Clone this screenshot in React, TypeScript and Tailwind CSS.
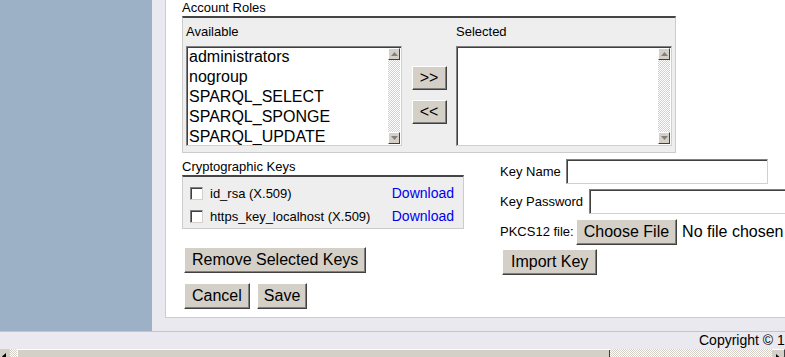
const btn =
  "flex items-center bg-[#d4d0c8] border border-t-white border-l-white border-r-[#404040] border-b-[#404040] shadow-[inset_-1px_-1px_0_#808080] text-[16px] leading-none text-black whitespace-nowrap"
const inset =
  "border border-t-[#808080] border-l-[#808080] border-r-[#d4d0c8] border-b-[#d4d0c8] shadow-[inset_1px_1px_0_#404040] bg-white"
const checker =
  "bg-[image:repeating-conic-gradient(#d4d0c8_0%_25%,#ffffff_0%_50%)] bg-[length:2px_2px]"

const Tri = ({ dir, color }: { dir: "up" | "down" | "left" | "right"; color: string }) => {
  const pts = {
    up: "0,4 3.5,0 7,4",
    down: "0,0 3.5,4 7,0",
    left: "4,0 0,3.5 4,7",
    right: "0,0 4,3.5 0,7",
  }[dir]
  const vertical = dir === "up" || dir === "down"
  return (
    <svg width={vertical ? 7 : 4} height={vertical ? 4 : 7} viewBox={vertical ? "0 0 7 4" : "0 0 4 7"}>
      <polygon points={pts} fill={color} />
    </svg>
  )
}

const ScrollBtn = ({ dir }: { dir: "up" | "down" }) => (
  <div className="flex h-[12px] w-[12px] items-center justify-center border border-t-white border-l-white border-r-[#404040] border-b-[#404040] bg-[#d4d0c8]">
    <Tri dir={dir} color="#808080" />
  </div>
)

const ListBox = ({ items }: { items: string[] }) => (
  <div className={`flex h-[100px] w-[216px] ${inset}`}>
    <div className="flex-1 overflow-hidden pl-[2px] text-[16px] leading-[20px] text-black">
      {items.map((i) => (
        <div key={i}>{i}</div>
      ))}
    </div>
    <div className="flex w-[13px] flex-col py-[1px] pr-[1px]">
      <ScrollBtn dir="up" />
      <div className={`flex-1 ${checker}`} />
      <ScrollBtn dir="down" />
    </div>
  </div>
)

const CheckBox = () => <div className={`h-[13px] w-[13px] ${inset}`} />

const KeyRow = ({ name }: { name: string }) => (
  <div className="flex h-[23px] items-center justify-between pl-[7px] pr-[9px]">
    <div className="flex items-center gap-[7px]">
      <CheckBox />
      <span className="text-[13px]">{name}</span>
    </div>
    <a className="cursor-pointer text-[14px] text-[#0000ee]">Download</a>
  </div>
)

export default function App() {
  return (
    <div className="flex h-[357px] w-[785px] flex-col overflow-hidden bg-[#e9e9ef] font-['Liberation_Sans',Arial,sans-serif] text-black">
      <div className="flex h-[331px] shrink-0">
        <div className="w-[152px] shrink-0 bg-[#9cb1c5]" />
        <div className="flex-1 pl-[13px]">
          <div className="h-[318px] border-b border-l border-r border-b-[#cccccc] border-l-[#cccccc] border-r-[#d4d0c8] bg-white pl-[16px]">
            {/* account roles */}
            <div className="h-[16px] text-[13px] leading-[16px]">Account Roles</div>
            <div className="w-[494px] border-b border-l border-r border-t-2 border-[#cccccc] border-t-[#454545] bg-[#eeeeee] px-[3px] pb-[6px] pt-[6px]">
              <div className="grid grid-cols-[216px_54px_216px]">
                <div className="h-[16px] text-[13px] leading-[16px]">Available</div>
                <div />
                <div className="h-[16px] text-[13px] leading-[16px]">Selected</div>
                <div className="mt-[6px]">
                  <ListBox
                    items={[
                      "administrators",
                      "nogroup",
                      "SPARQL_SELECT",
                      "SPARQL_SPONGE",
                      "SPARQL_UPDATE",
                    ]}
                  />
                </div>
                <div className="mt-[6px] flex flex-col items-center gap-[10px] pt-[20px]">
                  <button className={`${btn} h-[24px] w-[35px] justify-center text-[15px]`}>&gt;&gt;</button>
                  <button className={`${btn} h-[24px] w-[35px] justify-center text-[15px]`}>&lt;&lt;</button>
                </div>
                <div className="mt-[6px]">
                  <ListBox items={[]} />
                </div>
              </div>
            </div>

            <div className="mt-[6px] flex">
              {/* left column */}
              <div className="w-[282px] shrink-0">
                <div className="h-[16px] text-[13px] leading-[16px]">Cryptographic Keys</div>
                <div className="border-b border-l border-r border-t-2 border-[#cccccc] border-t-[#454545] bg-[#eeeeee] pt-[5px]">
                  <KeyRow name="id_rsa (X.509)" />
                  <KeyRow name="https_key_localhost (X.509)" />
                </div>
                <div className="ml-[2px] mt-[18px] flex">
                  <button className={`${btn} h-[26px] px-[7px]`}>Remove Selected Keys</button>
                </div>
                <div className="ml-[2px] mt-[10px] flex gap-[7px]">
                  <button className={`${btn} h-[26px] px-[7px]`}>Cancel</button>
                  <button className={`${btn} h-[26px] px-[6px]`}>Save</button>
                </div>
              </div>

              {/* right column */}
              <div className="ml-[36px] flex flex-col gap-[5px] text-[13px]">
                <div className="flex h-[25px] items-center gap-[5px] whitespace-nowrap">
                  <span>Key Name</span>
                  <div className={`h-[25px] w-[202px] ${inset}`} />
                </div>
                <div className="flex h-[25px] items-center gap-[6px] whitespace-nowrap">
                  <span>Key Password</span>
                  <div className={`h-[25px] w-[202px] shrink-0 ${inset}`} />
                </div>
                <div className="flex h-[26px] items-center whitespace-nowrap">
                  <span className="mr-[2px]">PKCS12 file:</span>
                  <button className={`${btn} h-[26px] px-[7px]`}>Choose File</button>
                  <span className="ml-[5px] text-[16px]">No file chosen</span>
                </div>
                <div className="-mt-[1px] ml-[2px] flex">
                  <button className={`${btn} h-[26px] px-[8px]`}>Import Key</button>
                </div>
              </div>
            </div>
          </div>
        </div>
      </div>

      {/* footer */}
      <div className="h-[18px] shrink-0 overflow-hidden border-t border-[#c4c4cc] pl-[699px] text-[14px] leading-[17px] whitespace-nowrap">
        Copyright © 1999-2019 OpenLink Software
      </div>

      {/* window scrollbar */}
      <div className="flex h-[16px] shrink-0">
        <div className="flex w-[10px] items-start justify-start bg-[#d4d0c8] pl-[2px] pt-[4px]">
          <Tri dir="left" color="#000000" />
        </div>
        <div className={`w-[7px] ${checker}`} />
        <div className="w-[593px] border-l border-t border-white bg-[#d4d0c8] shadow-[inset_-1px_-1px_0_#404040]" />
        <div className={`flex-1 ${checker}`} />
        <div className="flex w-[13px] items-start justify-center border-r border-t border-r-[#404040] border-t-white bg-[#d4d0c8] pt-[4px]">
          <Tri dir="right" color="#000000" />
        </div>
      </div>
    </div>
  )
}
